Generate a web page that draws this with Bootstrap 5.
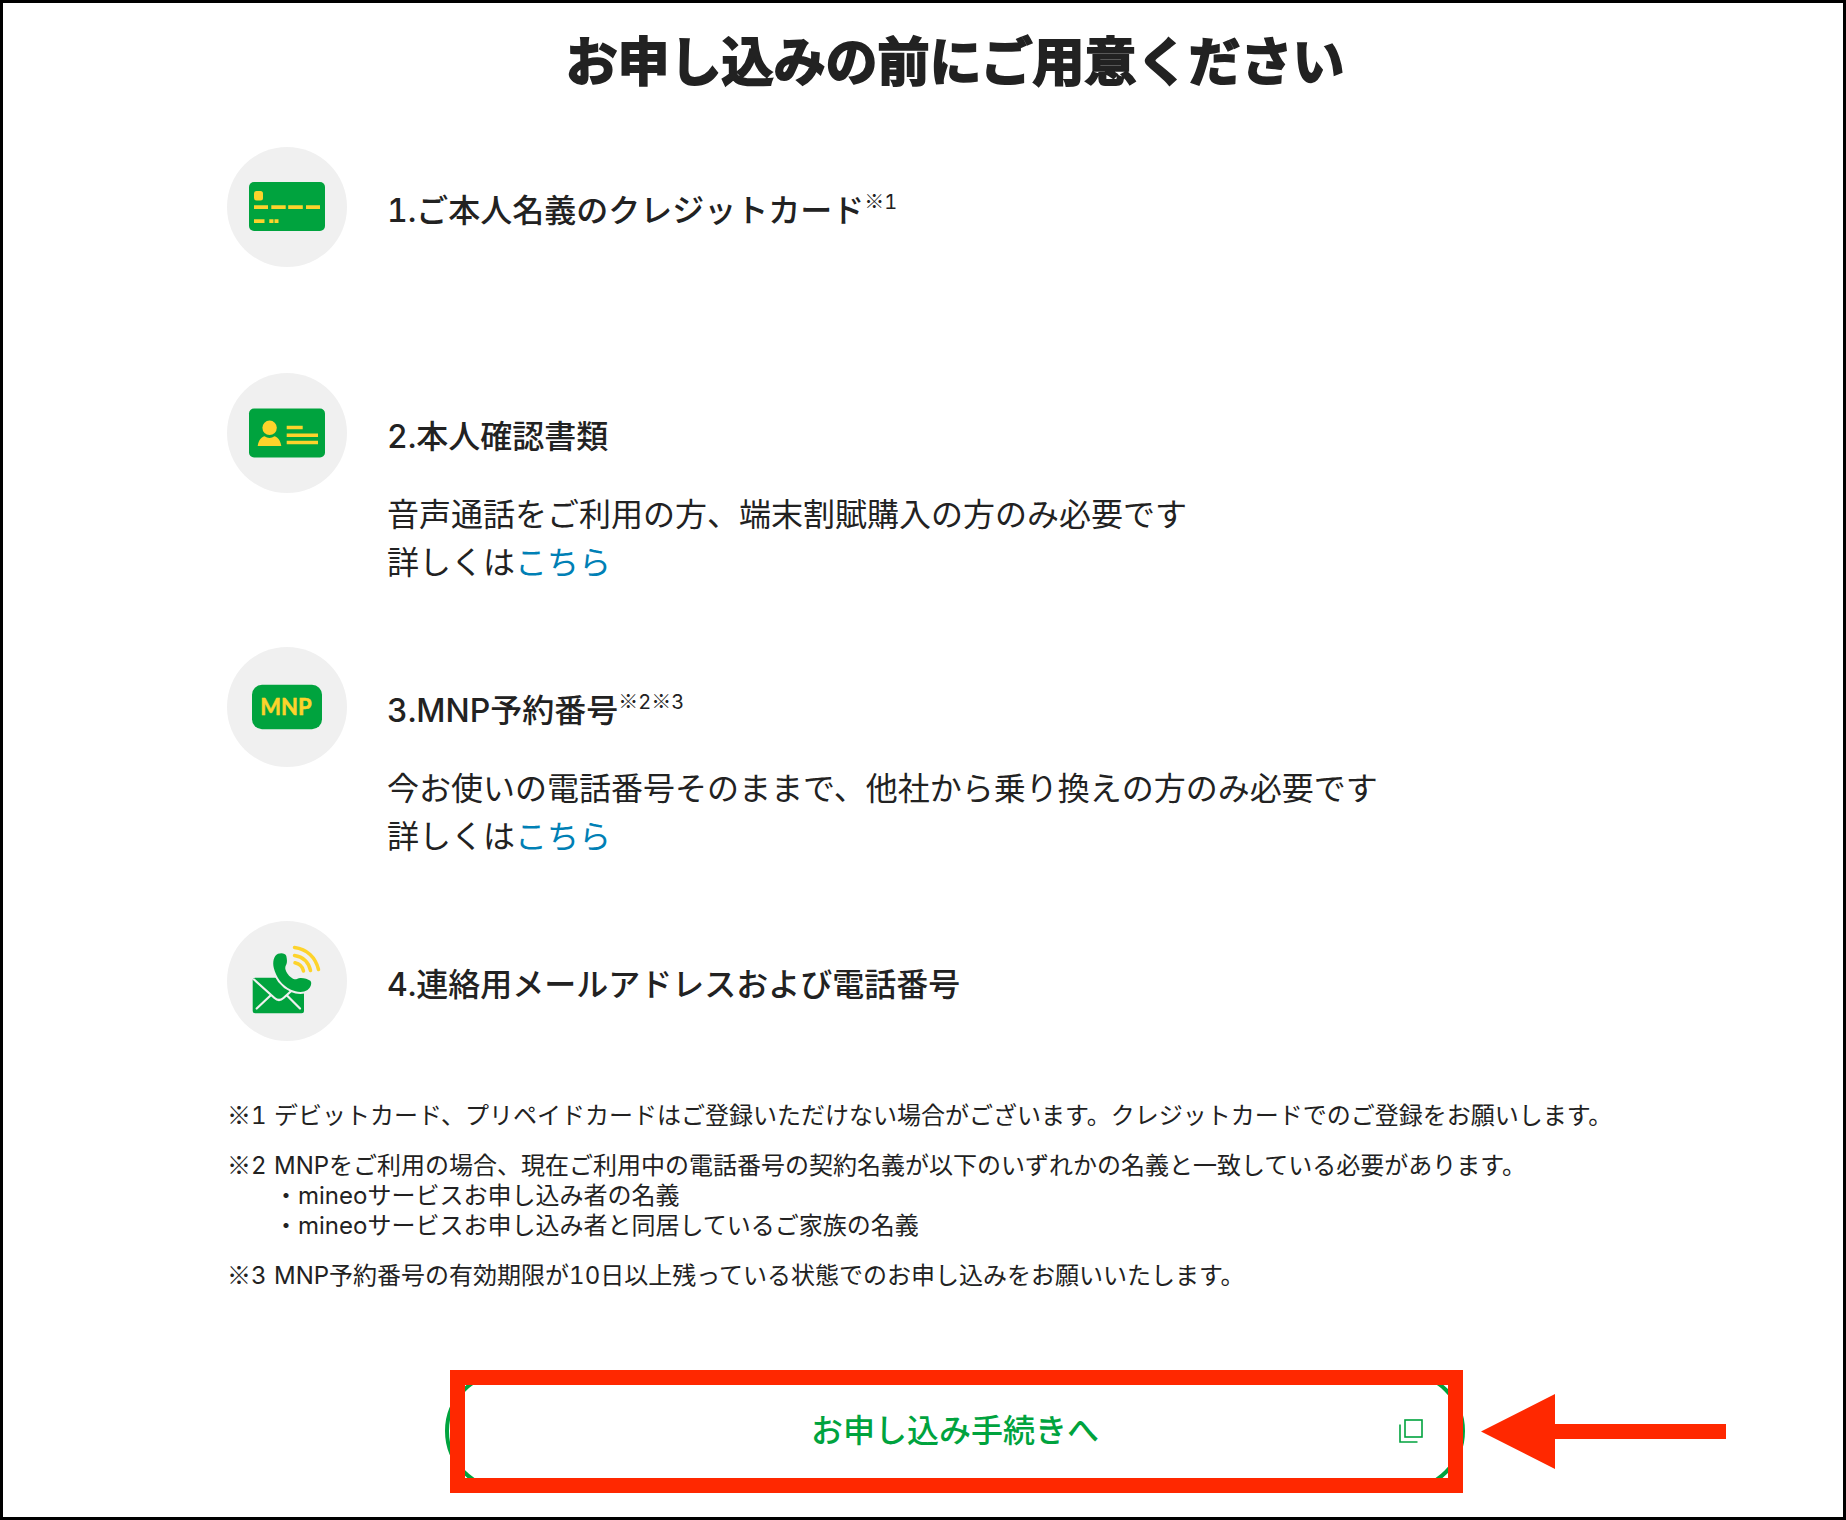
<!DOCTYPE html>
<html lang="ja">
<head>
<meta charset="utf-8">
<meta name="viewport" content="width=device-width, initial-scale=1">
<title>お申し込みの前にご用意ください</title>
<link href="https://cdn.jsdelivr.net/npm/bootstrap@5.3.0/dist/css/bootstrap.min.css" rel="stylesheet">
<style>
  :root { --ink: #222; --brand: #00a33e; --marker: #ff2800; }
  body { font-family: Inter, "Noto Sans CJK JP", sans-serif; font-variant-numeric: tabular-nums; color: var(--ink); background: #fff; }
  .page-frame { border: 3px solid #000; padding: 22px 160px 26px 224px; min-height: 100vh; }
  .page-title { font-family: "Noto Sans CJK JP", sans-serif; font-size: 52px; font-weight: 700; -webkit-text-stroke: 2px var(--ink); line-height: 68px; margin-bottom: 54px; }
  .ref-mark { font-family: "Noto Sans CJK JP", sans-serif; line-height: 0; }
  .prep-list { gap: 60px; }
  .prep-item { gap: 40px; min-height: 166px; }
  .prep-item:last-child { min-height: 120px; }
  .prep-icon { width: 120px; height: 120px; }
  .prep-text { padding-top: 40px; font-size: 32px; line-height: 48px; }
  .prep-text h2 { font-size: 32px; font-weight: 500; line-height: 48px; margin: 0; }
  .prep-text h2 sup { font-size: 20px; font-weight: 400; line-height: 1; top: -13px; vertical-align: baseline; }
  .prep-text p { margin: 30px 0 0; }
  .prep-text a { color: #0080b5; }
  .note-list { gap: 20px; margin-top: 60px; font-size: 24px; line-height: 30px; }
  .note-label { width: 47px; }
  .apply-wrap { max-width: 1020px; margin-top: 80px; }
  .apply-btn { height: 120px; border: 4px solid var(--brand); color: var(--brand); background: #fff; font-size: 32px; font-weight: 500; }
  .apply-btn:hover { border-color: var(--brand); color: var(--brand); background: #f3fbf5; }
  .apply-icon { right: 38px; }
  .highlight-box { inset: -1px 2px -2px 5px; border: 15px solid var(--marker); pointer-events: none; }
  .highlight-arrow { left: 100%; margin-left: 16px; }
</style>
<script src="https://cdn.jsdelivr.net/npm/bootstrap@5.3.0/dist/js/bootstrap.bundle.min.js"></script>
</head>
<body>
<main class="page-frame">
  <h1 class="page-title text-center">お申し込みの前にご用意ください</h1>

  <ul class="prep-list list-unstyled d-flex flex-column mb-0">
    <li class="prep-item d-flex">
      <svg class="prep-icon flex-shrink-0" viewBox="0 0 120 120" aria-hidden="true">
        <circle cx="60" cy="60" r="60" fill="#f0f0f0"/>
        <rect x="22" y="35" width="76" height="49" rx="5" fill="#00a33e"/>
        <g fill="#fdd32b">
          <rect x="27" y="44" width="9" height="9.500" rx="2.500"/>
          <path d="M27 58.300h14v3.700H27zM44.300 58.300h14.400v3.700H44.300zM61.200 58.300h14.600v3.700H61.200zM79 58.300h14v3.700H79zM27 72.300h10.500v3.700H27zM42.300 72.300h4.200v3.700h-4.200zM47.500 72.300h4v3.700h-4z"/>
        </g>
      </svg>
      <div class="prep-text">
        <h2>1.ご本人名義のクレジットカード<sup><span class="ref-mark">※</span>1</sup></h2>
      </div>
    </li>
    <li class="prep-item d-flex">
      <svg class="prep-icon flex-shrink-0" viewBox="0 0 120 120" aria-hidden="true">
        <circle cx="60" cy="60" r="60" fill="#f0f0f0"/>
        <rect x="22" y="35.500" width="76" height="49" rx="5" fill="#00a33e"/>
        <g fill="#fdd32b">
          <circle cx="42.600" cy="54.800" r="7.200"/>
          <path d="M30.700 73C31.500 66.500 35.500 63.500 37.500 63.300Q42.500 66.500 47.500 63.300C49.500 63.500 53.500 66.500 54.300 73z"/>
          <path d="M59.700 52.700h16v3.500h-16zM59.700 60.400h31.300v3.600H59.700zM59.700 67.700h31.300v3.600H59.700z"/>
        </g>
      </svg>
      <div class="prep-text">
        <h2>2.本人確認書類</h2>
        <p>音声通話をご利用の方、端末割賦購入の方のみ必要です<br>詳しくは<a class="text-decoration-none" href="#identity">こちら</a></p>
      </div>
    </li>
    <li class="prep-item d-flex">
      <svg class="prep-icon flex-shrink-0" viewBox="0 0 120 120" aria-hidden="true">
        <circle cx="60" cy="60" r="60" fill="#f0f0f0"/>
        <rect x="25" y="37.700" width="70" height="44.600" rx="10" fill="#00a33e"/>
        <text x="59" y="68" text-anchor="middle" font-family="Lato, sans-serif" font-size="22" font-weight="700" fill="#fdd32b" stroke="#fdd32b" stroke-width="0.500">MNP</text>
      </svg>
      <div class="prep-text">
        <h2>3.MNP予約番号<sup><span class="ref-mark">※</span>2<span class="ref-mark">※</span>3</sup></h2>
        <p>今お使いの電話番号そのままで、他社から乗り換えの方のみ必要です<br>詳しくは<a class="text-decoration-none" href="#mnp">こちら</a></p>
      </div>
    </li>
    <li class="prep-item d-flex">
      <svg class="prep-icon flex-shrink-0" viewBox="0 0 120 120" aria-hidden="true">
        <circle cx="60" cy="60" r="60" fill="#f0f0f0"/>
        <rect x="25.700" y="56.700" width="51.300" height="35.600" rx="2.500" fill="#00a33e"/>
        <path d="M27 58.500L47.500 77Q52 81 56.500 77L72 63M29.700 87.500L43.500 74.500M73 87.500L60 74.500" fill="none" stroke="#f0f0f0" stroke-width="2.200" stroke-linecap="round"/>
        <path d="M51 32.800C54 31.500 58.500 32 59.300 35C60 38 60.300 41 59.500 43C58.500 45 57.800 46.500 58.600 49C60 53 63.500 57 67.500 58.300C70 58.500 71 56.700 74 57C77.500 57.300 81 58 83.300 59.800C85.500 62 83.500 67 80.500 69C76 72 69 71 64 68.800C55 64.500 49 56 46.800 47C45.500 41 46.500 35 51 32.800z" fill="#00a33e" stroke="#f0f0f0" stroke-width="4" paint-order="stroke"/>
        <g fill="none" stroke="#fdd32b" stroke-width="3.500" stroke-linecap="round">
          <path d="M67.500 26.500C80 28 88.500 36.500 91.500 48.500"/>
          <path d="M67.500 34.500C76 35.800 81.500 41 83.500 49.500"/>
          <path d="M68 41.800C72.500 42.800 75.500 45.800 76.500 50"/>
        </g>
      </svg>
      <div class="prep-text">
        <h2>4.連絡用メールアドレスおよび電話番号</h2>
      </div>
    </li>
  </ul>

  <ul class="note-list list-unstyled d-flex flex-column mb-0">
    <li class="d-flex">
      <span class="note-label flex-shrink-0"><span class="ref-mark">※</span>1</span>
      <span>デビットカード、プリペイドカードはご登録いただけない場合がございます。クレジットカードでのご登録をお願いします。</span>
    </li>
    <li class="d-flex">
      <span class="note-label flex-shrink-0"><span class="ref-mark">※</span>2</span>
      <span>MNPをご利用の場合、現在ご利用中の電話番号の契約名義が以下のいずれかの名義と一致している必要があります。<br>・mineoサービスお申し込み者の名義<br>・mineoサービスお申し込み者と同居しているご家族の名義</span>
    </li>
    <li class="d-flex">
      <span class="note-label flex-shrink-0"><span class="ref-mark">※</span>3</span>
      <span>MNP予約番号の有効期限が10日以上残っている状態でのお申し込みをお願いいたします。</span>
    </li>
  </ul>

  <div class="apply-wrap position-relative d-flex align-items-center mx-auto">
    <button type="button" class="apply-btn btn rounded-pill w-100 position-relative d-flex align-items-center justify-content-center">
      お申し込み手続きへ
      <svg class="apply-icon position-absolute" width="24" height="24" viewBox="0 0 24 24" fill="none" stroke="currentColor" stroke-width="1.600" aria-hidden="true">
        <rect x="6" y="1" width="17" height="17"/>
        <path d="M1 5.500V23H18.500"/>
      </svg>
    </button>
    <div class="highlight-box position-absolute"></div>
    <svg class="highlight-arrow position-absolute" width="245" height="75" viewBox="0 0 245 75" fill="#ff2800" aria-hidden="true">
      <path d="M0 37.500L74 0V30H245V45H74V75z"/>
    </svg>
  </div>
</main>
</body>
</html>
